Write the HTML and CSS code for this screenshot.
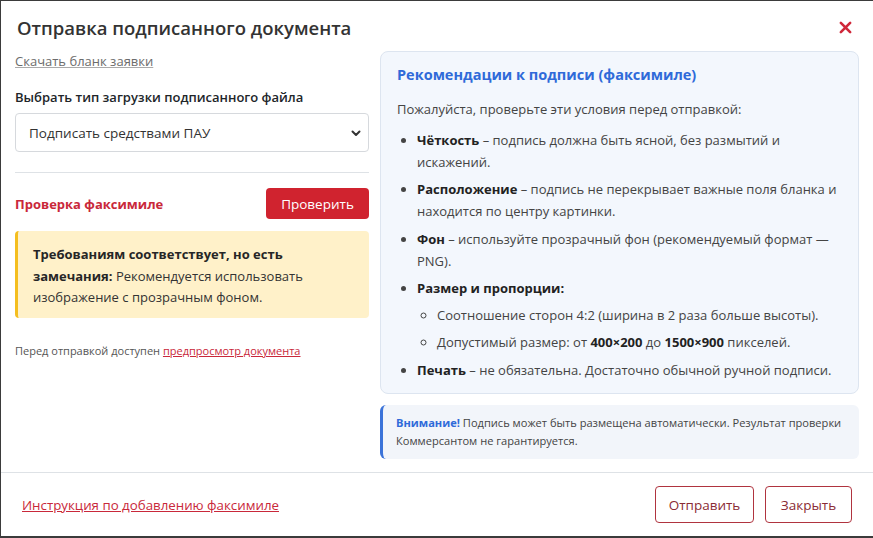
FILE: index.html
```html
<!DOCTYPE html>
<html lang="ru">
<head>
<meta charset="utf-8">
<title>Отправка подписанного документа</title>
<link rel="stylesheet" href="styles.css">
</head>
<body>
<div class="modal">
  <div class="modal-header">
    <h1 class="modal-title">Отправка подписанного документа</h1>
    <button class="close" aria-label="Закрыть">
      <svg width="13" height="13" viewBox="0 0 14 14"><path d="M2 2L12 12M12 2L2 12" stroke="#d0283a" stroke-width="2.8" stroke-linecap="round"/></svg>
    </button>
  </div>
  <div class="modal-body">
    <div class="col-left">
      <a class="download" href="#">Скачать бланк заявки</a>
      <label class="field-label">Выбрать тип загрузки подписанного файла</label>
      <div class="select">
        <span>Подписать средствами ПАУ</span>
        <svg width="12" height="12" viewBox="0 0 12 12"><path d="M2.5 4.5L6 8L9.5 4.5" fill="none" stroke="#333" stroke-width="2" stroke-linecap="round" stroke-linejoin="round"/></svg>
      </div>
      <hr class="divider">
      <div class="check-row">
        <span class="check-title">Проверка факсимиле</span>
        <button class="btn-red">Проверить</button>
      </div>
      <div class="alert-warning">
        <b>Требованиям соответствует, но есть замечания:</b> Рекомендуется использовать изображение с прозрачным фоном.
      </div>
      <p class="preview-note">Перед отправкой доступен <a href="#">предпросмотр документа</a></p>
    </div>
    <div class="col-right">
      <div class="rec-card">
        <h2 class="rec-title">Рекомендации к подписи (факсимиле)</h2>
        <p class="rec-intro">Пожалуйста, проверьте эти условия перед отправкой:</p>
        <ul class="rec-list">
          <li><b>Чёткость</b> – подпись должна быть ясной, без размытий и искажений.</li>
          <li><b>Расположение</b> – подпись не перекрывает важные поля бланка и находится по центру картинки.</li>
          <li><b>Фон</b> – используйте прозрачный фон (рекомендуемый формат — PNG).</li>
          <li><b>Размер и пропорции:</b>
            <ul class="sub-list">
              <li>Соотношение сторон 4:2 (ширина в 2 раза больше высоты).</li>
              <li>Допустимый размер: от <b>400×200</b> до <b>1500×900</b> пикселей.</li>
            </ul>
          </li>
          <li><b>Печать</b> – не обязательна. Достаточно обычной ручной подписи.</li>
        </ul>
      </div>
      <div class="alert-info">
        <b>Внимание!</b> Подпись может быть размещена автоматически. Результат проверки Коммерсантом не гарантируется.
      </div>
    </div>
  </div>
  <div class="modal-footer">
    <a class="instr" href="#">Инструкция по добавлению факсимиле</a>
    <div class="footer-buttons">
      <button class="btn-outline btn-send">Отправить</button>
      <button class="btn-outline btn-close">Закрыть</button>
    </div>
  </div>
</div>
</body>
</html>
```

FILE: styles.css
```css
* { box-sizing: border-box; }
html, body { margin: 0; padding: 0; }
body {
  background: #3b3b3b;
  font-family: "Open Sans", "Noto Sans", sans-serif;
  color: #212529;
  width: 873px;
  height: 538px;
  overflow: hidden;
}
.modal {
  margin: 1px 0 0 1px;
  width: 872px;
  height: 535px;
  background: #fff;
  display: flex;
  flex-direction: column;
}
.modal-header {
  display: flex;
  align-items: center;
  justify-content: space-between;
  padding: 3px 21px 0 16px;
  height: 50px;
}
.modal-title {
  margin: 0;
  font-size: 18.5px;
  font-weight: 600;
  color: #333;
}
.close {
  border: 0;
  background: none;
  padding: 0;
  display: flex;
}
.modal-body {
  display: flex;
  gap: 11px;
  padding: 0 14px 0 14px;
  flex: 1;
}
.col-left {
  width: 354px;
  display: flex;
  flex-direction: column;
  padding-top: 1px;
}
.download {
  font-size: 13px;
  color: #6c6c6c;
  text-decoration: underline;
  text-decoration-color: #aaa;
  align-self: flex-start;
}
.field-label {
  margin-top: 18px;
  font-size: 13px;
  font-weight: 600;
}
.select {
  margin-top: 7px;
  height: 39px;
  border: 1px solid #d6d9dd;
  border-radius: 4px;
  display: flex;
  align-items: center;
  justify-content: space-between;
  padding: 0 6px 0 13px;
  font-size: 13.5px;
  color: #333;
}
.divider {
  border: 0;
  border-top: 1px solid #dee2e6;
  margin: 20px 0 15px;
  width: 100%;
}
.check-row {
  display: flex;
  justify-content: space-between;
  align-items: center;
}
.check-title {
  color: #c9283a;
  font-weight: 700;
  font-size: 13px;
}
.btn-red {
  background: #d0232f;
  color: #fff;
  border: 0;
  border-radius: 4px;
  font-family: inherit;
  font-size: 13.5px;
  width: 103px;
  height: 31px;
}
.alert-warning {
  margin-top: 12px;
  background: #fff1c9;
  border-left: 3px solid #f4be1f;
  border-radius: 4px;
  padding: 13px 16px 9px 15px;
  font-size: 13px;
  line-height: 21.5px;
  color: #333;
}
.alert-warning b { color: #262626; }
.preview-note {
  margin: 25px 0 0;
  font-size: 11px;
  color: #555;
}
.preview-note a { color: #c9283a; }
.col-right {
  flex: 1;
  display: flex;
  flex-direction: column;
}
.rec-card {
  background: #f3f7fd;
  border: 1px solid #dde5f0;
  border-radius: 8px;
  padding: 13px 16px 6px 16px;
}
.rec-title {
  margin: 0;
  font-size: 14.5px;
  font-weight: 700;
  color: #2f6ad9;
}
.rec-intro {
  margin: 16px 0 12px;
  font-size: 13px;
  color: #444;
}
.rec-list {
  margin: 0;
  padding-left: 20px;
  font-size: 13px;
  line-height: 21.5px;
  color: #444;
}
.rec-list > li { margin-bottom: 6px; }
.rec-list > li:nth-child(2) { margin-bottom: 7px; }
.rec-list b { color: #222; }
.sub-list {
  list-style: circle;
  padding-left: 20px;
  margin: 5px 0 0;
}
.sub-list li { margin-bottom: 6px; }
.alert-info {
  margin-top: 11px;
  background: #f2f5fa;
  border-left: 3px solid #3b73d9;
  border-radius: 6px;
  padding: 9px 5px 9px 13px;
  font-size: 11.1px;
  line-height: 18px;
  color: #444;
}
.alert-info b { color: #2f6ad9; }
.modal-footer {
  border-top: 1px solid #dee2e6;
  height: 64px;
  display: flex;
  align-items: center;
  justify-content: space-between;
  padding: 0 21px 0 21px;
}
.instr {
  color: #c9283a;
  font-size: 13.3px;
  text-decoration: underline;
}
.footer-buttons { display: flex; gap: 11px; }
.btn-outline {
  background: #fff;
  border: 1px solid #b0343f;
  border-radius: 4px;
  color: #8a2b34;
  font-family: inherit;
  font-size: 13.5px;
  height: 37px;
  padding: 0;
}
.btn-send { width: 99px; }
.btn-close { width: 87px; }
```
